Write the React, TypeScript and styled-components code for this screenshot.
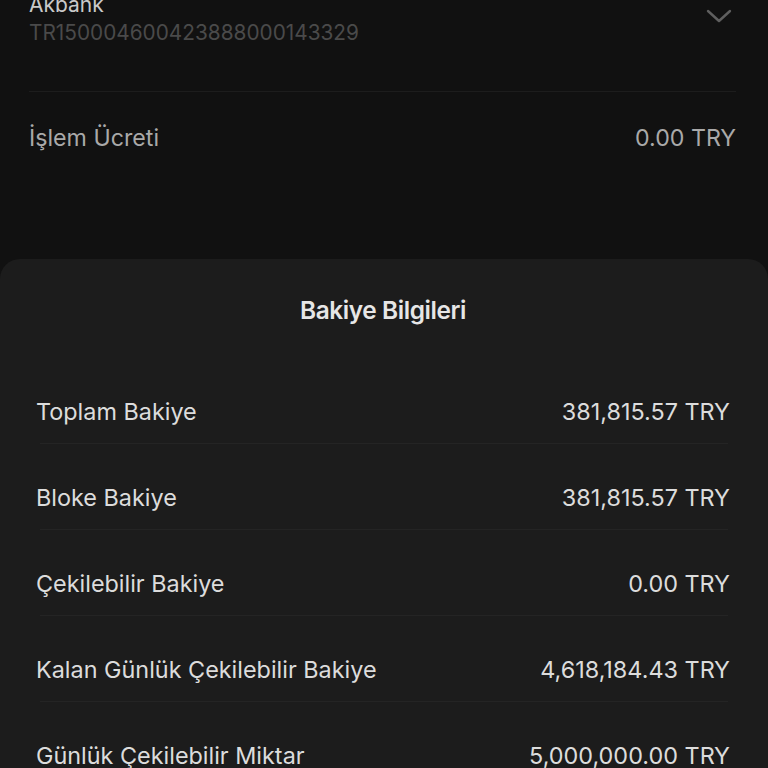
import React from 'react'
import styled, { createGlobalStyle } from 'styled-components'

const GlobalStyle = createGlobalStyle`
    html, body {
        margin: 0;
        padding: 0;
        background: #111111;
        font-family: Inter, "Noto Sans", sans-serif;
        -webkit-font-smoothing: antialiased;
    }
    * { box-sizing: border-box; }
`

const balances = [
    { label: 'Toplam Bakiye', value: '381,815.57 TRY' },
    { label: 'Bloke Bakiye', value: '381,815.57 TRY' },
    { label: 'Çekilebilir Bakiye', value: '0.00 TRY' },
    { label: 'Kalan Günlük Çekilebilir Bakiye', value: '4,618,184.43 TRY' },
    { label: 'Günlük Çekilebilir Miktar', value: '5,000,000.00 TRY' },
]

const ChevronDown = () => (
    <svg width="26" height="16" viewBox="0 0 26 16" fill="none">
        <path d="M2 3 L13 13 L24 3" stroke="#5f5f5f" strokeWidth="2.4" strokeLinecap="round" strokeLinejoin="round" />
    </svg>
)

export default function App() {
    return (
        <Screen>
            <GlobalStyle />
            <Top>
                <BankRow>
                    <BankInfo>
                        <BankName>Akbank</BankName>
                        <Iban>TR150004600423888000143329</Iban>
                    </BankInfo>
                    <ChevronBox>
                        <ChevronDown />
                    </ChevronBox>
                </BankRow>
                <FeeRow>
                    <FeeText>İşlem Ücreti</FeeText>
                    <FeeText>0.00 TRY</FeeText>
                </FeeRow>
            </Top>
            <Sheet>
                <SheetTitle>Bakiye Bilgileri</SheetTitle>
                <List>
                    {balances.map((b) => (
                        <Row key={b.label}>
                            <Cell>{b.label}</Cell>
                            <Cell>{b.value}</Cell>
                        </Row>
                    ))}
                </List>
            </Sheet>
        </Screen>
    )
}

const Screen = styled.div`
    width: 768px;
    height: 768px;
    overflow: hidden;
    background: #111111;
    display: flex;
    flex-direction: column;
`

const Top = styled.section`
    padding: 0 32px 0 29px;
    height: 259px;
    flex-shrink: 0;
`

const BankRow = styled.div`
    display: flex;
    justify-content: space-between;
    align-items: flex-start;
    margin-top: -8px;
    padding-bottom: 45px;
    border-bottom: 1px solid #1d1d1d;
`

const BankInfo = styled.div`
    display: flex;
    flex-direction: column;
    gap: 2px;
`

const BankName = styled.div`
    font-size: 21px;
    line-height: 26px;
    color: #c9c9c9;
`

const Iban = styled.div`
    font-size: 20.8px;
    line-height: 26px;
    color: #4a4a4a;
`

const ChevronBox = styled.div`
    padding-top: 16px;
    margin-right: 4px;
`

const FeeRow = styled.div`
    display: flex;
    justify-content: space-between;
    align-items: center;
    padding-top: 32px;
    line-height: 28px;
`

const FeeText = styled.div`
    font-size: 23.2px;
    color: #a9a9a9;
`

const Sheet = styled.section`
    flex: 1;
    background: #1c1c1c;
    border-radius: 20px 20px 0 0;
    padding: 0 38px 0 36px;
`

const SheetTitle = styled.h2`
    margin: 0;
    padding-top: 36px;
    text-align: center;
    font-size: 24.4px;
    line-height: 30px;
    font-weight: 600;
    letter-spacing: -0.4px;
    color: #e6e6e6;
`

const List = styled.div`
    display: flex;
    flex-direction: column;
    padding-top: 33px;
`

const Row = styled.div`
    position: relative;
    display: flex;
    justify-content: space-between;
    align-items: center;
    height: 86px;
    padding: 40px 0 18px;
    line-height: 28px;
    &::after {
        content: '';
        position: absolute;
        left: 4px;
        right: 2px;
        bottom: 0;
        height: 1px;
        background: #242424;
    }
`

const Cell = styled.div`
    font-size: 23.4px;
    color: #dcdcdc;
`
